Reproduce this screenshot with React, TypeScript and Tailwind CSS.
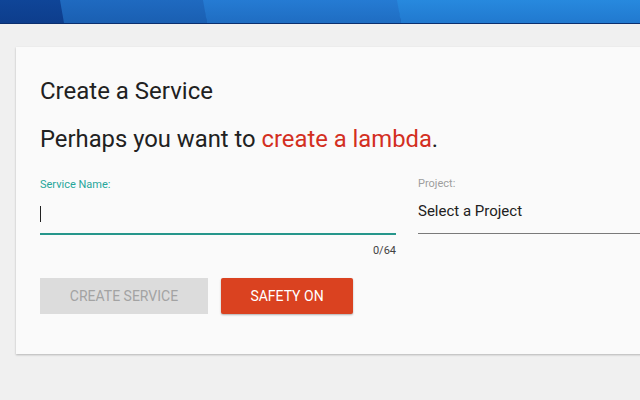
import React from "react";

const font = { fontFamily: "Roboto, 'Liberation Sans', sans-serif" };

// header band with slanted blue panels
const Header = () => (
  <div className="h-[24px] w-full">
    <svg width="640" height="24" viewBox="0 0 640 24" className="block">
      <defs>
        <linearGradient id="g1" x1="0" y1="0" x2="0" y2="1">
          <stop offset="0" stopColor="#0f4598" />
          <stop offset="1" stopColor="#0d3d8c" />
        </linearGradient>
        <linearGradient id="g2" x1="0" y1="0" x2="0" y2="1">
          <stop offset="0" stopColor="#1f6ac0" />
          <stop offset="1" stopColor="#1a5fb2" />
        </linearGradient>
        <linearGradient id="g3" x1="0" y1="0" x2="0" y2="1">
          <stop offset="0" stopColor="#257bd3" />
          <stop offset="1" stopColor="#1f6dc2" />
        </linearGradient>
        <linearGradient id="g4" x1="0" y1="0" x2="0" y2="1">
          <stop offset="0" stopColor="#2789de" />
          <stop offset="1" stopColor="#2179cf" />
        </linearGradient>
      </defs>
      <rect x="0" y="0" width="640" height="24" fill="url(#g1)" />
      <polygon points="60,0 204,0 207,23 64,23" fill="url(#g2)" />
      <polygon points="203,0 398,0 401,23 207,23" fill="url(#g3)" />
      <polygon points="397,0 640,0 640,23 401,23" fill="url(#g4)" />
      <rect x="0" y="23" width="640" height="1" fill="#0b2f6e" />
    </svg>
  </div>
);

export default function App() {
  return (
    <div className="w-[640px] h-[400px] overflow-hidden bg-[#f0f0f0]" style={font}>
      <Header />
      <div className="pt-[23px] pl-[16px]">
        <div className="w-[700px] bg-[#fafafa] shadow-[0_1px_2px_rgba(0,0,0,0.25)] pl-[24px] pt-[30px] pb-[40px]">
          <h1 className="text-[24px] leading-[28px] text-[#212121]">Create a Service</h1>
          <p className="mt-[20px] text-[23.8px] leading-[28px] text-[#212121]">
            Perhaps you want to <span className="text-[#d32f1f]">create a lambda</span>.
          </p>
          <div className="mt-[25px] flex gap-[22px]">
            <div className="w-[356px] flex flex-col">
              <label className="text-[11px] leading-[14px] text-[#26a69a]">Service Name:</label>
              <div className="h-[41px] flex items-center">
                <div className="w-px h-[16px] bg-[#212121] mt-[3px]" />
              </div>
              <div className="h-[2px] bg-[#26968b]" />
              <div className="mt-[9px] text-right text-[11px] leading-[14px] text-[#424242]">0/64</div>
            </div>
            <div className="flex-1 flex flex-col">
              <label className="text-[11px] leading-[14px] text-[#9e9e9e] -mt-[1px]">Project:</label>
              <div className="h-[41px] flex items-center text-[15px] text-[#212121] pb-[1px]">Select a Project</div>
              <div className="h-px bg-[#7a7a7a] mt-[1px]" />
            </div>
          </div>
          <div className="mt-[20px] flex gap-[13px]">
            <button className="w-[168px] h-[36px] bg-[#dcdcdc] text-[#a3a3a3] text-[14px] uppercase">
              Create Service
            </button>
            <button className="w-[132px] h-[36px] rounded-[2px] bg-[#da4220] text-white text-[14px] uppercase shadow-[0_1px_2px_rgba(0,0,0,0.3)]">
              Safety On
            </button>
          </div>
        </div>
      </div>
    </div>
  );
}
